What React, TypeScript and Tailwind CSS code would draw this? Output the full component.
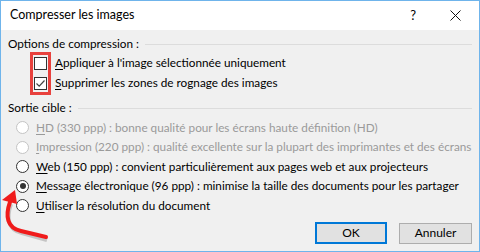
import React from "react";

const font = { fontFamily: 'Lato, "Noto Sans", sans-serif' };

function Acc({ k, rest }: { k: string; rest: string }) {
  return (
    <span className="whitespace-nowrap">
      <span className="underline underline-offset-2">{k}</span>
      {rest}
    </span>
  );
}

function Check({ checked, k, rest }: { checked?: boolean; k: string; rest: string }) {
  return (
    <div className="h-[20px] flex items-center pl-[33px]">
      <span className="w-[13px] h-[13px] border border-[#333] bg-white flex items-center justify-center">
        {checked && (
          <svg width="11" height="11" viewBox="0 0 11 11">
            <path d="M1.5 5.5 L4.2 8.2 L9.5 2.5" fill="none" stroke="#444" strokeWidth="1.2" />
          </svg>
        )}
      </span>
      <span className="ml-[8px] text-[11.75px] text-black">
        <Acc k={k} rest={rest} />
      </span>
    </div>
  );
}

function Radio({ on, off, k, rest }: { on?: boolean; off?: boolean; k: string; rest: string }) {
  return (
    <div className="h-[19.5px] flex items-center pl-[15px]">
      <span
        className={
          "w-[13px] h-[13px] rounded-full border bg-white flex items-center justify-center " +
          (off ? "border-[#c4c4c4]" : "border-[#333]")
        }
      >
        {on && <span className="w-[6px] h-[6px] rounded-full bg-[#333]" />}
      </span>
      <span className={"ml-[7px] text-[11.75px] " + (off ? "text-[#9a9a9a]" : "text-black")}>
        <Acc k={k} rest={rest} />
      </span>
    </div>
  );
}

function Section({ label }: { label: string }) {
  return (
    <div className="h-[16px] flex items-center pl-[7px] pr-[7px]">
      <span className="text-[11.75px] text-black whitespace-nowrap">{label}</span>
      <span className="flex-1 h-px bg-[#dcdcdc] ml-[6px]" />
    </div>
  );
}

export default function App() {
  return (
    <div style={font} className="relative w-[480px] h-[252px] border border-[#6fb4eb] bg-[#f0f0f0] flex flex-col overflow-hidden">
      {/* title bar */}
      <div className="h-[29px] bg-white flex items-center pl-[9px] pr-[18px]">
        <span className="text-[12.5px] text-black flex-1">Compresser les images</span>
        <span className="text-[13px] text-black mr-[34px]">?</span>
        <svg width="11" height="11" viewBox="0 0 11 11">
          <path d="M0.5 0.5 L10.5 10.5 M10.5 0.5 L0.5 10.5" stroke="#111" strokeWidth="1" />
        </svg>
      </div>

      <div className="mt-[6px]">
        <Section label="Options de compression :" />
      </div>
      <div className="mt-[1px]">
        <Check k="A" rest="ppliquer à l'image sélectionnée uniquement" />
        <Check checked k="S" rest="upprimer les zones de rognage des images" />
      </div>

      <div className="mt-[7px]">
        <Section label="Sortie cible :" />
      </div>
      <div className="mt-[2px]">
        <Radio off k="H" rest="D (330 ppp) : bonne qualité pour les écrans haute définition (HD)" />
        <Radio off k="I" rest="mpression (220 ppp) : qualité excellente sur la plupart des imprimantes et des écrans" />
        <Radio k="W" rest="eb (150 ppp) : convient particulièrement aux pages web et aux projecteurs" />
        <Radio on k="M" rest="essage électronique (96 ppp) : minimise la taille des documents pour les partager" />
        <Radio k="U" rest="tiliser la résolution du document" />
      </div>

      <div className="mt-[6px] flex justify-end gap-[12px] pr-[7px]">
        <button className="w-[72px] h-[22px] border-2 border-[#0078d7] bg-[#e1e1e1] text-[12px] text-black">
          OK
        </button>
        <button className="w-[73px] h-[21px] mt-px border border-[#adadad] bg-[#e1e1e1] text-[12px] text-black">
          Annuler
        </button>
      </div>

      {/* red annotation box around the checkboxes */}
      <div className="absolute left-[29px] top-[51px] w-[21px] h-[43px] border-[3px] border-[#e8413d]" />

      {/* red annotation arrow */}
      <svg className="absolute left-0 top-[185px]" width="60" height="60" viewBox="0 0 60 60">
        <path d="M9 16 C4 30, 6 42, 20 45 L45 52" fill="none" stroke="#999" strokeOpacity="0.5" strokeWidth="4" transform="translate(1,2)" />
        <path d="M9 16 C4 30, 6 42, 20 45 L45 51" fill="none" stroke="#f01b1b" strokeWidth="4" strokeLinecap="round" />
        <path d="M14 4 L1 14 L16 18 Z" fill="#f01b1b" />
      </svg>
    </div>
  );
}
